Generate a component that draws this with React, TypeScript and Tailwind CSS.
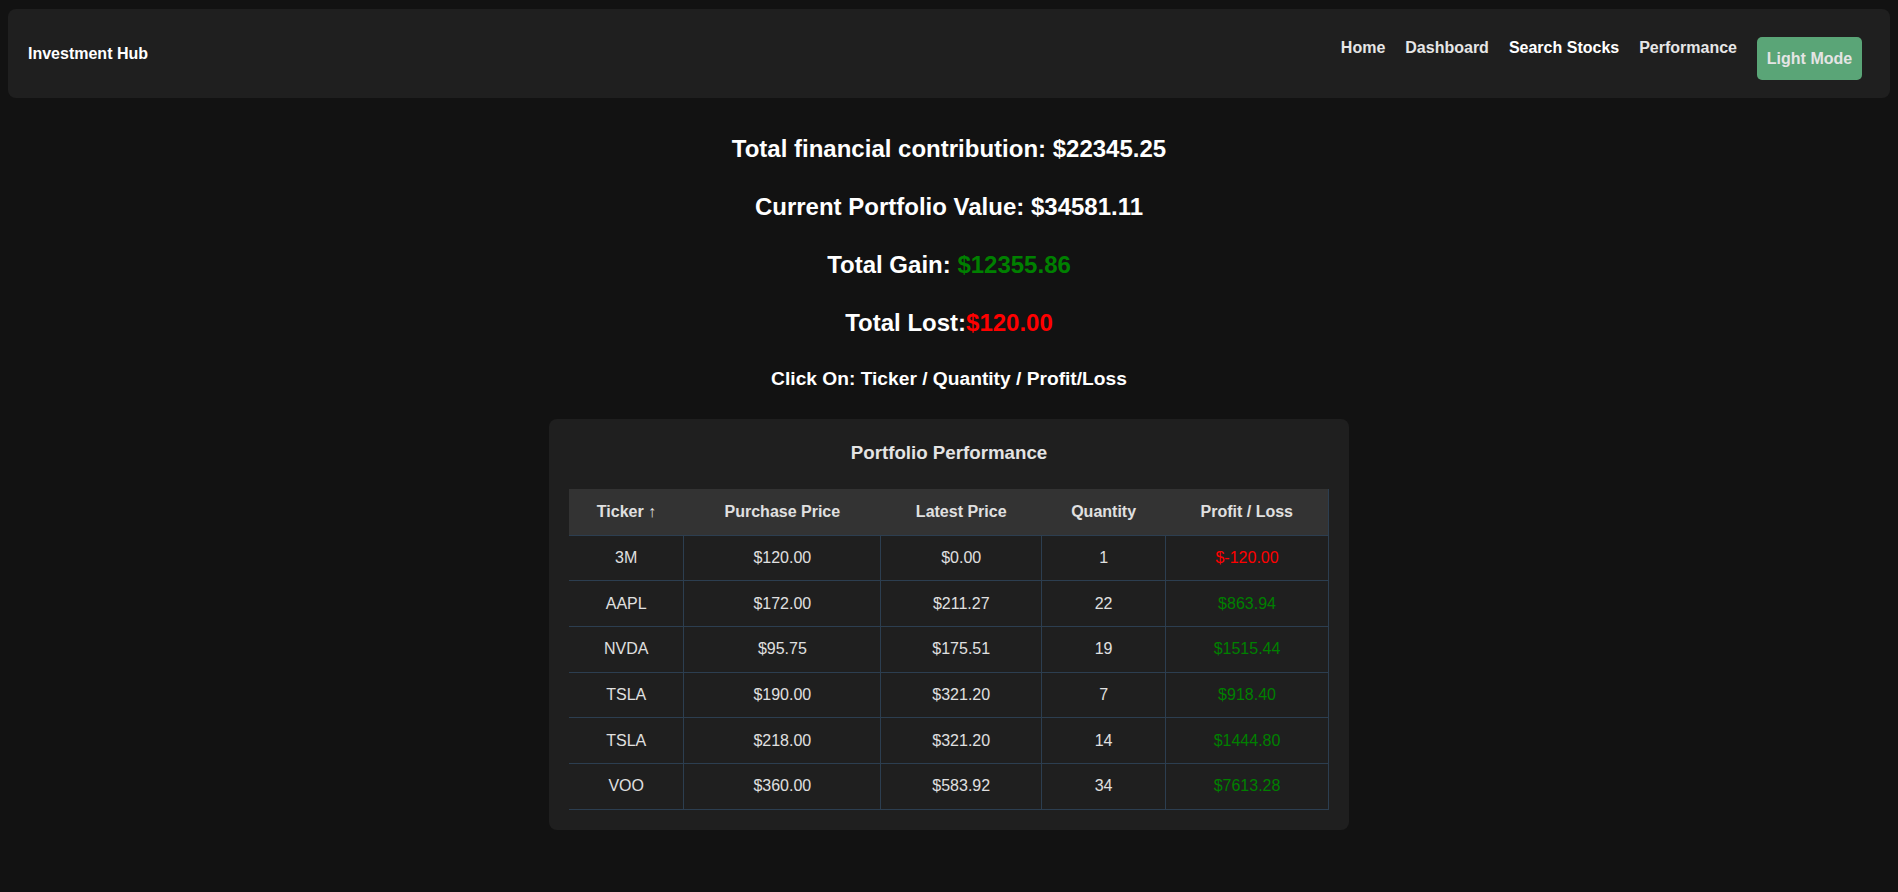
import React from 'react';

interface Holding {
  ticker: string;
  purchase: string;
  latest: string;
  quantity: number;
  profit: string;
  loss?: boolean;
}

const holdings: Holding[] = [
  { ticker: '3M', purchase: '$120.00', latest: '$0.00', quantity: 1, profit: '$-120.00', loss: true },
  { ticker: 'AAPL', purchase: '$172.00', latest: '$211.27', quantity: 22, profit: '$863.94' },
  { ticker: 'NVDA', purchase: '$95.75', latest: '$175.51', quantity: 19, profit: '$1515.44' },
  { ticker: 'TSLA', purchase: '$190.00', latest: '$321.20', quantity: 7, profit: '$918.40' },
  { ticker: 'TSLA', purchase: '$218.00', latest: '$321.20', quantity: 14, profit: '$1444.80' },
  { ticker: 'VOO', purchase: '$360.00', latest: '$583.92', quantity: 34, profit: '$7613.28' },
];

const NavBar: React.FC = () => (
  <nav className="mx-2 h-[89px] rounded-lg bg-[#1f1f1f] pl-5 pr-[28px] flex items-center justify-between">
    <span className="text-[16px] font-bold text-white leading-[18px]">Investment Hub</span>
    <div className="flex items-start gap-5 mt-[10px]">
      <a className="mt-[2px] text-[16px] font-bold leading-[18px] text-[#e6e6e6]">Home</a>
      <a className="mt-[2px] text-[16px] font-bold leading-[18px] text-[#e6e6e6]">Dashboard</a>
      <a className="mt-[2px] text-[16px] font-bold leading-[18px] text-white">Search Stocks</a>
      <a className="mt-[2px] text-[16px] font-bold leading-[18px] text-[#e6e6e6]">Performance</a>
      <button className="h-[43px] w-[105px] rounded-[5px] bg-[#5aa577] text-[16px] font-bold text-[#e4e4e4]">
        Light Mode
      </button>
    </div>
  </nav>
);

export default function App() {
  return (
    <div
      className="min-h-[892px] bg-[#121212] text-white pt-[9px] pb-10"
      style={{ fontFamily: '"Liberation Sans", Arial, sans-serif' }}
    >
      <NavBar />

      {/* Summary */}
      <div className="mt-[37px] flex flex-col items-center gap-[30px] text-[24px] font-bold leading-[28px]">
        <h2>Total financial contribution: $22345.25</h2>
        <h2>Current Portfolio Value: $34581.11</h2>
        <h2>
          Total Gain: <span className="text-[#008000]">$12355.86</span>
        </h2>
        <h2>
          Total Lost:<span className="text-[#ff0000]">$120.00</span>
        </h2>
      </div>
      <h3 className="mt-[31px] text-center text-[19.2px] font-bold leading-[22px]">
        Click On: Ticker / Quantity / Profit/Loss
      </h3>

      {/* Portfolio table card */}
      <div className="mx-auto mt-[29px] w-[800px] rounded-lg bg-[#1f1f1f] px-5 pt-[23px] pb-5">
        <h3 className="text-center text-[18.72px] font-bold leading-[22px] text-[#e4e4e4]">
          Portfolio Performance
        </h3>
        <table className="mt-[25px] w-[760px] border-collapse text-[16px] text-[#e0e0e0]">
          <thead>
            <tr className="bg-[#333333] border-b border-r border-[#2c3e50]">
              <th className="w-[115px] h-[46px] font-bold">
                Ticker <span className="font-normal">↑</span>
              </th>
              <th className="w-[197px] font-bold">Purchase Price</th>
              <th className="w-[161px] font-bold">Latest Price</th>
              <th className="w-[124px] font-bold">Quantity</th>
              <th className="w-[163px] font-bold">Profit / Loss</th>
            </tr>
          </thead>
          <tbody>
            {holdings.map((h, idx) => (
              <tr key={idx} className="border-b border-[#2c3e50]">
                <td className="h-[45.7px] text-center">{h.ticker}</td>
                <td className="border-l border-[#2c3e50] text-center">{h.purchase}</td>
                <td className="border-l border-[#2c3e50] text-center">{h.latest}</td>
                <td className="border-l border-[#2c3e50] text-center">{h.quantity}</td>
                <td
                  className={`border-l border-r border-[#2c3e50] text-center ${
                    h.loss ? 'text-[#ff0000]' : 'text-[#008000]'
                  }`}
                >
                  {h.profit}
                </td>
              </tr>
            ))}
          </tbody>
        </table>
      </div>
    </div>
  );
}
